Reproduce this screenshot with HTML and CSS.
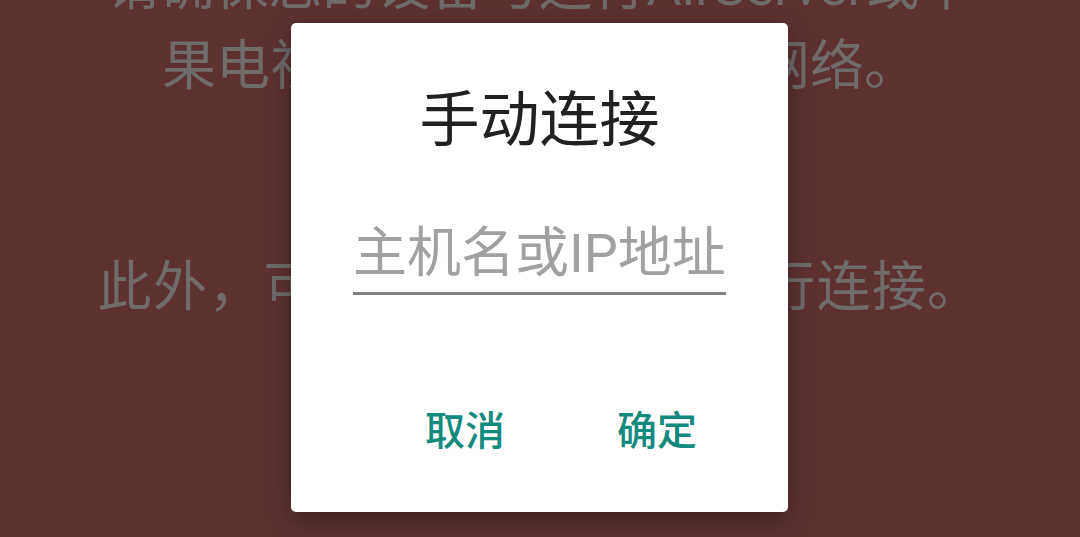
FILE: index.html
```html
<!DOCTYPE html>
<html lang="zh-CN">
<head>
<meta charset="utf-8">
<title>手动连接</title>
<link rel="stylesheet" href="styles.css">
</head>
<body>
<main class="screen">
  <p class="info first">请确保您的设备与运行AirServer或苹<br>果电视的设备连接到同一网络。</p>
  <p class="info second">此外，可以手动输入地址进行连接。</p>
</main>
<div class="scrim">
  <div class="dialog" role="dialog">
    <h1 class="dialog-title">手动连接</h1>
    <div class="field">
      <input class="field-input" type="text" placeholder="主机名或IP地址">
    </div>
    <div class="actions">
      <button class="btn">取消</button>
      <button class="btn">确定</button>
    </div>
  </div>
</div>
</body>
</html>
```
FILE: styles.css
```css
* { box-sizing: border-box; }
html, body {
  margin: 0;
  padding: 0;
  width: 1080px;
  height: 537px;
  overflow: hidden;
  background: #5e3131;
  font-family: "Roboto", "Noto Sans CJK SC", sans-serif;
}
.screen {
  display: flex;
  flex-direction: column;
  align-items: center;
  margin-top: -53px;
}
.info {
  margin: 0;
  font-size: 54px;
  line-height: 80px;
  color: #6f6c6c;
  text-align: center;
  white-space: nowrap;
}
.info.first { margin-bottom: 141px; }
.info.second { letter-spacing: 1.3px; }

.scrim {
  position: absolute;
  inset: 0;
}
.dialog {
  position: absolute;
  left: 291px;
  top: 23px;
  width: 497px;
  background: #ffffff;
  border-radius: 5px;
  box-shadow: 0 8px 28px rgba(0, 0, 0, 0.35);
  display: flex;
  flex-direction: column;
  align-items: center;
  padding: 62px 0 52px;
}
.dialog-title {
  margin: 0;
  font-size: 60px;
  line-height: 72px;
  font-weight: 400;
  color: #212121;
}
.field {
  margin-top: 65px;
  width: 373px;
  border-bottom: 3px solid #7f7f7f;
  padding-bottom: 6px;
}
.field-input {
  display: block;
  width: 100%;
  border: 0;
  outline: 0;
  padding: 0;
  margin: 0;
  background: transparent;
  font-family: inherit;
  font-size: 54px;
  line-height: 64px;
  height: 64px;
  color: #212121;
  text-align: left;
}
.field-input::placeholder { color: #a1a1a1; }
.actions {
  margin-top: 109px;
  align-self: stretch;
  display: flex;
  justify-content: flex-end;
  gap: 48px;
  padding-right: 59px;
}
.btn {
  border: 0;
  background: transparent;
  padding: 0 32px;
  margin: 0;
  font-family: inherit;
  font-size: 40px;
  line-height: 56px;
  font-weight: 500;
  color: #138a7e;
}
```
